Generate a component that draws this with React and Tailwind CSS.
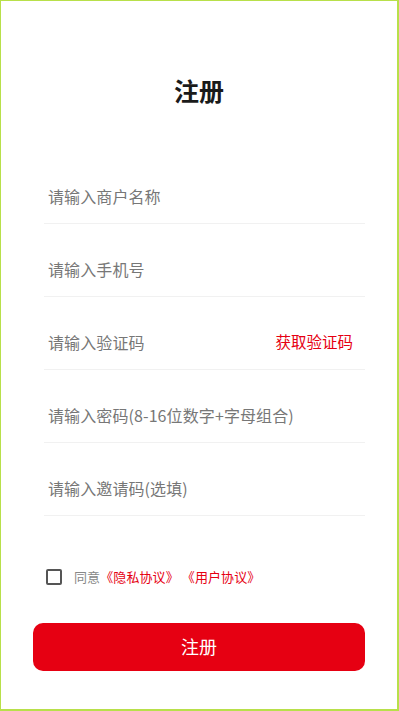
export default function App() {
  const fields = [
    { placeholder: "请输入商户名称" },
    { placeholder: "请输入手机号" },
    { placeholder: "请输入验证码", action: "获取验证码" },
    { placeholder: "请输入密码(8-16位数字+字母组合)" },
    { placeholder: "请输入邀请码(选填)" },
  ];

  return (
    <div
      className="w-full h-[711px] bg-white border-l border-t border-r-2 border-b-2 border-[#b8e04a] flex flex-col px-[32px]"
      style={{ fontFamily: '"Noto Sans CJK SC", "Noto Sans", sans-serif' }}
    >
      {/* TITLE */}
      <h1 className="mt-[71px] text-center text-[25px] leading-[36px] font-bold text-[#1a1a1a]">
        注册
      </h1>

      {/* FORM */}
      <div className="mt-[43px] ml-[11px] flex flex-col">
        {fields.map((f) => (
          <div
            key={f.placeholder}
            className="mt-[22px] h-[51px] flex items-center justify-between border-b border-[#f1f1f1] pl-[4px] pr-[12px] pb-[4px]"
          >
            <span className="text-[16px] text-[#777] tracking-[0.1px]">{f.placeholder}</span>
            {f.action && (
              <span className="text-[15.5px] text-[#e60012]">{f.action}</span>
            )}
          </div>
        ))}
      </div>

      {/* AGREEMENT */}
      <div className="mt-[51px] ml-[13px] flex items-center gap-[12px]">
        <div className="w-[16px] h-[16px] border-2 border-[#555] rounded-[2px]" />
        <span className="text-[13px] text-[#888] tracking-[0.1px]">
          同意<span className="text-[#e60012]">《隐私协议》 《用户协议》</span>
        </span>
      </div>

      {/* SUBMIT */}
      <button className="mt-[36px] h-[48px] w-full rounded-[10px] bg-[#e60012] text-white text-[18px]">
        注册
      </button>
    </div>
  );
}
